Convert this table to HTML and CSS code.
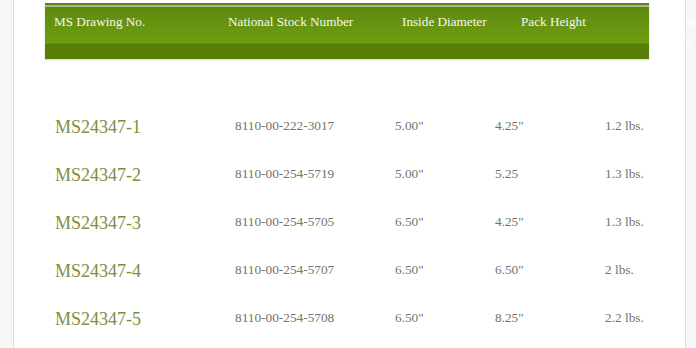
FILE: index.html
```html
<!DOCTYPE html>
<html>
<head>
<meta charset="utf-8">
<link rel="stylesheet" href="styles.css">
</head>
<body>
<div class="page">
  <div class="side side-left"></div>
  <main class="content">
    <div class="thead">
      <div class="th">MS Drawing No.</div>
      <div class="th">National Stock Number</div>
      <div class="th">Inside Diameter</div>
      <div class="th">Pack Height</div>
      <div class="th th-last">Shipping Weight</div>
    </div>
    <div class="tbody">
      <div class="row"><div class="ms">MS24347-1</div><div class="cell">8110-00-222-3017</div><div class="cell">5.00"</div><div class="cell">4.25"</div><div class="cell">1.2 lbs.</div></div>
      <div class="row"><div class="ms">MS24347-2</div><div class="cell">8110-00-254-5719</div><div class="cell">5.00"</div><div class="cell">5.25</div><div class="cell">1.3 lbs.</div></div>
      <div class="row"><div class="ms">MS24347-3</div><div class="cell">8110-00-254-5705</div><div class="cell">6.50"</div><div class="cell">4.25"</div><div class="cell">1.3 lbs.</div></div>
      <div class="row"><div class="ms">MS24347-4</div><div class="cell">8110-00-254-5707</div><div class="cell">6.50"</div><div class="cell">6.50"</div><div class="cell">2 lbs.</div></div>
      <div class="row"><div class="ms">MS24347-5</div><div class="cell">8110-00-254-5708</div><div class="cell">6.50"</div><div class="cell">8.25"</div><div class="cell">2.2 lbs.</div></div>
    </div>
  </main>
  <div class="side side-right"></div>
</div>
</body>
</html>
```
FILE: styles.css
```css
* { box-sizing: border-box; }
html, body { margin: 0; padding: 0; height: 100%; }
body {
  font-family: "Liberation Serif", "Times New Roman", serif;
  background: #fff;
  overflow: hidden;
}
.page {
  display: flex;
  height: 348px;
}
.side {
  background: #f7f7f7;
  flex: none;
}
.side-left {
  width: 14px;
  border-right: 1px solid #dcdcdc;
}
.side-right {
  width: 16px;
  border-left: 1px solid #dcdcdc;
}
.content {
  flex: 1;
  background: #fff;
  position: relative;
  z-index: 0;
}
.thead {
  margin: 3px 0 0 31px;
  width: 604px;
  height: 56px;
  padding: 9px 0 0 9px;
  display: grid;
  grid-template-columns: 174px 174px 119px 133px 60px;
  align-items: start;
  background:
    linear-gradient(to bottom,
      #5a8614 0, #5a8614 2px,
      #a6b690 2px, #a6b690 4px,
      #5e8a0e 4px, #6e9d11 40px,
      #557e07 41px, #557e07 56px);
  box-shadow: 0 1px 2px rgba(0,0,0,0.18);
  color: #f6f7ef;
  font-size: 13.2px;
  line-height: 19px;
}
.th { white-space: nowrap; }
.th-last {
  white-space: normal;
  width: 60px;
  color: #ffffff;
  position: relative;
  z-index: 2;
}
.tbody {
  margin-top: 43px;
  padding-left: 41px;
}
.row {
  display: grid;
  grid-template-columns: 180px 160px 100px 110px 80px;
  height: 48px;
  align-items: center;
}
.ms {
  font-size: 18px;
  color: #76923c;
  padding-top: 2px;
}
.cell {
  font-size: 13.3px;
  color: #737373;
  padding-bottom: 1px;
}
```
